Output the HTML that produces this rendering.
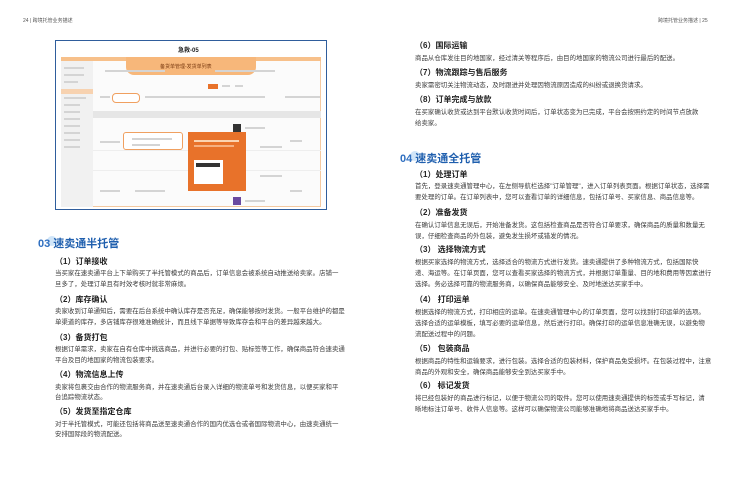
<!DOCTYPE html>
<html><head><meta charset="utf-8"><style>
*{margin:0;padding:0;box-sizing:border-box}
body{width:732px;height:500px;background:#fff;position:relative;overflow:hidden;font-family:"Liberation Sans","Noto Sans CJK SC",sans-serif;color:#333}
.a{position:absolute;white-space:nowrap}
.h{font-size:8px;font-weight:bold;color:#222}
.b{font-size:6.4px;color:#3a3a3a;letter-spacing:0.05px}
.sec{font-size:11px;font-weight:bold;color:#1f5fae}
.sec .n{color:#2f6fc0}
.dot{position:absolute;width:10px;height:10px;border-radius:50%;background:#bcdaf5;opacity:.7}
.ft{font-size:5px;color:#555}
.g{position:absolute;background:#d4d4d4;height:2px}
.l{position:absolute;background:#eee;height:1px}
</style></head><body>
<div class="a ft" style="left:23px;top:17px">24 | 跨境托管业务描述</div>
<div class="a ft" style="left:658px;top:17px">跨境托管业务描述 | 25</div>

<!-- screenshot -->
<div style="position:absolute;left:55px;top:40px;width:272px;height:170px;border:1.5px solid #2f5d9c;background:#fff"></div>
<div class="a" style="left:178px;top:45px;font-size:6px;font-weight:bold;color:#222">急救-05</div>
<div style="position:absolute;left:61px;top:57px;width:260px;height:150px;background:#fbfbfb;border:1px solid #f4c9a0"></div>
<div style="position:absolute;left:61px;top:57px;width:260px;height:4px;background:#f7c08a"></div>
<div style="position:absolute;left:61px;top:61px;width:32px;height:146px;background:#f1f1f1"></div>
<div style="position:absolute;left:61px;top:89px;width:32px;height:5px;background:#f7d2b0"></div>
<div style="position:absolute;left:126px;top:57px;width:130px;height:18px;background:#f7b77a;border-radius:0 0 8px 8px"></div>
<div class="a" style="left:160px;top:63px;font-size:5px;color:#7a3a10">备货单管理-发货单列表</div>
<div style="position:absolute;left:208px;top:84px;width:10px;height:5px;background:#e8722a"></div>
<div class="g" style="left:222px;top:85px;width:8px"></div><div class="g" style="left:235px;top:85px;width:8px"></div>
<div style="position:absolute;left:112px;top:93px;width:28px;height:10px;border:1px solid #f0a060;border-radius:4px;background:#fff"></div>
<div style="position:absolute;left:93px;top:111px;width:228px;height:7px;background:#e6e6e6"></div>
<div class="l" style="left:93px;top:150px;width:228px"></div>
<div class="l" style="left:93px;top:170px;width:228px"></div>
<div style="position:absolute;left:233px;top:124px;width:8px;height:9px;background:#333"></div>
<div style="position:absolute;left:233px;top:197px;width:8px;height:8px;background:#6a4aa0"></div>
<div style="position:absolute;left:123px;top:132px;width:60px;height:18px;border:1px solid #f0a060;border-radius:3px;background:#fff"></div>
<div class="g" style="left:132px;top:138px;width:40px"></div><div class="g" style="left:132px;top:144px;width:28px"></div>
<div style="position:absolute;left:188px;top:132px;width:58px;height:59px;background:#e8722a"></div>
<div style="position:absolute;left:194px;top:160px;width:29px;height:24px;background:#fff"></div>
<div style="position:absolute;left:196px;top:163px;width:24px;height:4px;background:#333"></div>
<div style="position:absolute;left:194px;top:140px;width:45px;height:2px;background:#fbd3b0"></div>
<div style="position:absolute;left:194px;top:145px;width:40px;height:2px;background:#f6b080"></div>
<div class="g" style="left:64px;top:67px;width:20px"></div><div class="g" style="left:64px;top:74px;width:20px"></div>
<div class="g" style="left:64px;top:81px;width:14px"></div><div class="g" style="left:64px;top:97px;width:22px"></div>
<div class="g" style="left:64px;top:104px;width:16px"></div><div class="g" style="left:64px;top:111px;width:16px"></div>
<div class="g" style="left:64px;top:118px;width:16px"></div><div class="g" style="left:64px;top:125px;width:16px"></div>
<div class="g" style="left:64px;top:132px;width:16px"></div><div class="g" style="left:64px;top:139px;width:16px"></div>
<div class="g" style="left:64px;top:146px;width:16px"></div>
<div class="g" style="left:100px;top:96px;width:10px"></div><div class="g" style="left:145px;top:96px;width:120px"></div>
<div class="g" style="left:285px;top:96px;width:35px"></div>
<div class="g" style="left:105px;top:70px;width:60px"></div><div class="g" style="left:215px;top:70px;width:60px"></div>
<div class="g" style="left:260px;top:146px;width:22px"></div><div class="g" style="left:260px;top:175px;width:22px"></div>
<div class="g" style="left:100px;top:141px;width:20px"></div><div class="g" style="left:100px;top:190px;width:20px"></div>
<div class="g" style="left:135px;top:190px;width:30px"></div><div class="g" style="left:245px;top:127px;width:20px"></div>
<div class="g" style="left:245px;top:200px;width:20px"></div><div class="g" style="left:290px;top:140px;width:12px"></div>
<div class="g" style="left:290px;top:190px;width:12px"></div>

<!-- left page -->
<div class="dot" style="left:47px;top:236px"></div>
<div class="a sec" style="left:38px;top:235px"><span class="n">03 </span>速卖通半托管</div>
<div class="a h" style="left:55px;top:256px">（1）订单接收</div>
<div class="a b" style="left:55px;top:268px">当买家在速卖通平台上下单购买了半托管模式的商品后，订单信息会被系统自动推送给卖家。店铺一</div>
<div class="a b" style="left:55px;top:279px">旦多了，处理订单且有时效考核时就非常麻烦。</div>
<div class="a h" style="left:55px;top:294px">（2）库存确认</div>
<div class="a b" style="left:55px;top:306px">卖家收到订单通知后，需要在后台系统中确认库存是否充足，确保能够按时发货。一般平台维护的都是</div>
<div class="a b" style="left:55px;top:317px">单渠道的库存，多店铺库存很难准确统计，而且线下单据等导致库存会和平台的差异越来越大。</div>
<div class="a h" style="left:55px;top:332px">（3）备货打包</div>
<div class="a b" style="left:55px;top:344px">根据订单需求，卖家在自有仓库中挑选商品，并进行必要的打包、贴标签等工作，确保商品符合速卖通</div>
<div class="a b" style="left:55px;top:355px">平台及目的地国家的物流包装要求。</div>
<div class="a h" style="left:55px;top:369px">（4）物流信息上传</div>
<div class="a b" style="left:55px;top:382px">卖家将包裹交由合作的物流服务商，并在速卖通后台录入详细的物流单号和发货信息，以便买家和平</div>
<div class="a b" style="left:55px;top:392px">台追踪物流状态。</div>
<div class="a h" style="left:55px;top:406px">（5）发货至指定仓库</div>
<div class="a b" style="left:55px;top:419px">对于半托管模式，可能还包括将商品送至速卖通合作的国内优选仓或者国际物流中心，由速卖通统一</div>
<div class="a b" style="left:55px;top:429px">安排国际段的物流配送。</div>

<!-- right page -->
<div class="a h" style="left:415px;top:40px">（6）国际运输</div>
<div class="a b" style="left:415px;top:53px">商品从仓库发往目的地国家，经过清关等程序后，由目的地国家的物流公司进行最后的配送。</div>
<div class="a h" style="left:415px;top:67px">（7）物流跟踪与售后服务</div>
<div class="a b" style="left:415px;top:80px">卖家需密切关注物流动态，及时跟进并处理因物流原因造成的纠纷或退换货请求。</div>
<div class="a h" style="left:415px;top:94px">（8）订单完成与放款</div>
<div class="a b" style="left:415px;top:107px">在买家确认收货或达到平台默认收货时间后，订单状态变为已完成，平台会按照约定的时间节点放款</div>
<div class="a b" style="left:415px;top:118px">给卖家。</div>
<div class="dot" style="left:410px;top:151px"></div>
<div class="a sec" style="left:400px;top:150px"><span class="n">04 </span>速卖通全托管</div>
<div class="a h" style="left:415px;top:169px">（1）处理订单</div>
<div class="a b" style="left:415px;top:181px">首先，登录速卖通管理中心，在左侧导航栏选择"订单管理"，进入订单列表页面。根据订单状态，选择需</div>
<div class="a b" style="left:415px;top:192px">要处理的订单。在订单列表中，您可以查看订单的详细信息，包括订单号、买家信息、商品信息等。</div>
<div class="a h" style="left:415px;top:207px">（2）准备发货</div>
<div class="a b" style="left:415px;top:220px">在确认订单信息无误后，开始准备发货。这包括检查商品是否符合订单要求，确保商品的质量和数量无</div>
<div class="a b" style="left:415px;top:231px">误，仔细检查商品的外包装，避免发生损坏或错发的情况。</div>
<div class="a h" style="left:415px;top:244px">（3） 选择物流方式</div>
<div class="a b" style="left:415px;top:257px">根据买家选择的物流方式，选择适合的物流方式进行发货。速卖通提供了多种物流方式，包括国际快</div>
<div class="a b" style="left:415px;top:268px">递、海运等。在订单页面，您可以查看买家选择的物流方式，并根据订单重量、目的地和费用等因素进行</div>
<div class="a b" style="left:415px;top:279px">选择。务必选择可靠的物流服务商，以确保商品能够安全、及时地送达买家手中。</div>
<div class="a h" style="left:415px;top:294px">（4） 打印运单</div>
<div class="a b" style="left:415px;top:307px">根据选择的物流方式，打印相应的运单。在速卖通管理中心的订单页面，您可以找到打印运单的选项。</div>
<div class="a b" style="left:415px;top:318px">选择合适的运单模板，填写必要的运单信息，然后进行打印。确保打印的运单信息准确无误，以避免物</div>
<div class="a b" style="left:415px;top:329px">流配送过程中的问题。</div>
<div class="a h" style="left:415px;top:343px">（5） 包装商品</div>
<div class="a b" style="left:415px;top:356px">根据商品的特性和运输要求，进行包装。选择合适的包装材料，保护商品免受损坏。在包装过程中，注意</div>
<div class="a b" style="left:415px;top:367px">商品的外观和安全，确保商品能够安全到达买家手中。</div>
<div class="a h" style="left:415px;top:380px">（6） 标记发货</div>
<div class="a b" style="left:415px;top:393px">将已经包装好的商品进行标记，以便于物流公司的取件。您可以使用速卖通提供的标签或手写标记，清</div>
<div class="a b" style="left:415px;top:404px">晰地标注订单号、收件人信息等。这样可以确保物流公司能够准确地将商品送达买家手中。</div>
</body></html>
